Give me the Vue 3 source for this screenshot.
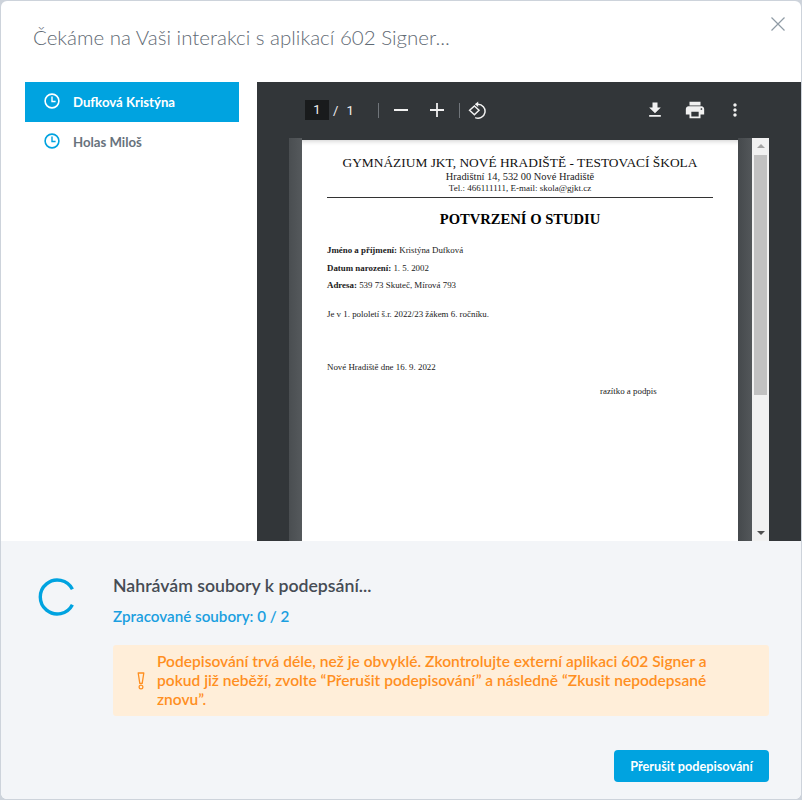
<script setup>
const signers = [
  { name: "Dufková Kristýna", active: true },
  { name: "Holas Miloš", active: false },
];
</script>

<template>
  <div class="modal">
    <header class="modal__head">
      <h1 class="modal__title">Čekáme na Vaši interakci s aplikací 602 Signer...</h1>
      <button class="close" aria-label="Zavřít">
        <svg width="16" height="16" viewBox="0 0 16 16"><path d="M1.5 1.5l13 13M14.5 1.5l-13 13" stroke="#8f9ba5" stroke-width="1.2" fill="none" /></svg>
      </button>
    </header>

    <div class="modal__body">
      <ul class="signers">
        <li v-for="s in signers" :key="s.name" class="signer" :class="{ 'signer--active': s.active }">
          <svg class="clock" width="16" height="16" viewBox="0 0 16 16">
            <circle cx="8" cy="8" r="6.9" fill="none" stroke="currentColor" stroke-width="1.6" />
            <path d="M8 3.6V8.5h3.6" fill="none" stroke="currentColor" stroke-width="1.4" />
          </svg>
          <span>{{ s.name }}</span>
        </li>
      </ul>

      <div class="viewer">
        <div class="toolbar">
          <span class="page-num">1</span>
          <span class="page-sep">/</span>
          <span class="page-total">1</span>
          <span class="divider divider--a"></span>
          <svg class="tool tool--minus" width="14" height="14" viewBox="0 0 14 14"><path d="M0 7h14" stroke="#f1f1f1" stroke-width="1.8" /></svg>
          <svg class="tool tool--plus" width="14" height="14" viewBox="0 0 14 14"><path d="M0 7h14M7 0v14" stroke="#f1f1f1" stroke-width="1.8" /></svg>
          <span class="divider divider--b"></span>
          <svg class="tool tool--rotate" width="18" height="18" viewBox="0 0 18 18">
            <path d="M1.6 9.3L6.4 5l4.6 4.3-4.6 4.4z" fill="none" stroke="#f1f1f1" stroke-width="1.5" />
            <path d="M7.6 3.2h2.2a7 7 0 1 1-2.6 13.4" fill="none" stroke="#f1f1f1" stroke-width="1.5" />
            <path d="M10.2 0.4L7 3.2l3.2 2.8z" fill="#f1f1f1" />
          </svg>
          <span class="toolbar__spacer"></span>
          <svg class="tool" width="20" height="20" viewBox="0 0 24 24"><path fill="#f1f1f1" d="M19 9h-4V3H9v6H5l7 7 7-7zM5 18v2h14v-2H5z" /></svg>
          <svg class="tool tool--print" width="22" height="22" viewBox="0 0 24 24"><path fill="#f1f1f1" d="M19 8H5c-1.66 0-3 1.34-3 3v6h4v4h12v-4h4v-6c0-1.66-1.34-3-3-3zm-3 11H8v-5h8v5zm3-7c-.55 0-1-.45-1-1s.45-1 1-1 1 .45 1 1-.45 1-1 1zm-1-9H6v4h12V3z" /></svg>
          <svg class="tool tool--more" width="20" height="20" viewBox="0 0 24 24"><path fill="#f1f1f1" d="M12 8c1.1 0 2-.9 2-2s-.9-2-2-2-2 .9-2 2 .9 2 2 2zm0 2c-1.1 0-2 .9-2 2s.9 2 2 2 2-.9 2-2-.9-2-2-2zm0 6c-1.1 0-2 .9-2 2s.9 2 2 2 2-.9 2-2-.9-2-2-2z" /></svg>
        </div>

        <div class="stage">
          <div class="strip strip--left"></div>
          <div class="page">
            <div class="doc-school">GYMNÁZIUM JKT, NOVÉ HRADIŠTĚ - TESTOVACÍ ŠKOLA</div>
            <div class="doc-addr">Hradištní 14, 532 00 Nové Hradiště</div>
            <div class="doc-tel">Tel.: 466111111, E-mail: skola@gjkt.cz</div>
            <hr class="doc-rule" />
            <div class="doc-title">POTVRZENÍ O STUDIU</div>
            <p class="doc-row doc-row--first"><b>Jméno a příjmení:</b> Kristýna Dufková</p>
            <p class="doc-row"><b>Datum narození:</b> 1. 5. 2002</p>
            <p class="doc-row"><b>Adresa:</b> 539 73 Skuteč, Mírová 793</p>
            <p class="doc-row doc-row--para">Je v 1. pololetí š.r. 2022/23 žákem 6. ročníku.</p>
            <p class="doc-row doc-row--date">Nové Hradiště dne 16. 9. 2022</p>
            <p class="doc-sign">razítko a podpis</p>
          </div>
          <div class="strip strip--right"></div>
          <div class="scrollbar">
            <span class="arrow arrow--up"></span>
            <span class="thumb"></span>
            <span class="arrow arrow--down"></span>
          </div>
        </div>
      </div>
    </div>

    <footer class="modal__foot">
      <div class="status">
        <svg class="spinner" width="38" height="38" viewBox="0 0 38 38">
          <path d="M34.4 11.2A17 17 0 1 0 34.4 26.8" fill="none" stroke="#00a3e0" stroke-width="3.4" />
        </svg>
        <div class="status__main">
          <div class="status__title">Nahrávám soubory k podepsání...</div>
          <div class="status__count">Zpracované soubory: 0 / 2</div>
          <div class="alert">
            <svg class="alert__icon" width="10" height="18" viewBox="0 0 10 18">
              <path d="M2.2 1h5.6L6.2 11.4H3.8z" fill="none" stroke="#ff8f1f" stroke-width="1.3" stroke-linejoin="round" />
              <circle cx="5" cy="15" r="1.9" fill="none" stroke="#ff8f1f" stroke-width="1.2" />
            </svg>
            <p class="alert__text">Podepisování trvá déle, než je obvyklé. Zkontrolujte externí aplikaci 602 Signer a pokud již neběží, zvolte “Přerušit podepisování” a následně “Zkusit nepodepsané znovu”.</p>
          </div>
        </div>
      </div>
      <div class="actions">
        <button class="btn">Přerušit podepisování</button>
      </div>
    </footer>
  </div>
</template>

<style>
html,
body {
  margin: 0;
  background: #cdd3db;
}
</style>

<style scoped>
.modal {
  box-sizing: border-box;
  width: 800px;
  height: 798px;
  margin: 1px;
  background: #fff;
  border-radius: 6px;
  overflow: hidden;
  display: flex;
  flex-direction: column;
  font-family: "Lato", "Noto Sans", sans-serif;
}
.modal__head {
  height: 81px;
  flex: none;
  position: relative;
  box-sizing: border-box;
  padding: 19px 32px 0;
}
.modal__title {
  margin: 0;
  font-size: 20.5px;
  line-height: 34px;
  font-weight: 300;
  color: #5f6a74;
}
.close {
  position: absolute;
  top: 15px;
  right: 15px;
  padding: 0;
  border: 0;
  background: none;
  display: block;
  line-height: 0;
}
.modal__body {
  height: 459px;
  flex: none;
  display: flex;
  padding-left: 24px;
  gap: 18px;
}
.signers {
  width: 214px;
  flex: none;
  margin: 0;
  padding: 0;
  list-style: none;
}
.signer {
  height: 40px;
  display: flex;
  align-items: center;
  padding-left: 19px;
  gap: 13px;
  font-size: 13.2px;
  font-weight: 700;
  color: #67727c;
}
.signer .clock {
  color: #00a3e0;
  margin-top: -3px;
}
.signer--active {
  background: #00a3e0;
  color: #fff;
}
.signer--active .clock {
  color: #fff;
}
.viewer {
  flex: 1;
  background: #323639;
  display: flex;
  flex-direction: column;
  min-width: 0;
}
.toolbar {
  height: 56px;
  flex: none;
  display: flex;
  align-items: center;
  padding-left: 48px;
  color: #f1f1f1;
  font-family: "Roboto", sans-serif;
  font-size: 13px;
}
.page-num {
  width: 24px;
  height: 20px;
  background: #191b1c;
  text-align: center;
  line-height: 20px;
}
.page-sep {
  margin-left: 4px;
}
.page-total {
  margin-left: 8px;
}
.divider {
  width: 1px;
  height: 15px;
  background: #70757a;
}
.divider--a {
  margin-left: 24px;
}
.tool--minus {
  margin-left: 15px;
}
.tool--plus {
  margin-left: 22px;
}
.divider--b {
  margin-left: 15px;
}
.tool--rotate {
  margin-left: 8px;
}
.toolbar__spacer {
  flex: 1;
}
.tool--print {
  margin-left: 19px;
}
.tool--more {
  margin-left: 19px;
  margin-right: 56px;
}
.stage {
  flex: 1;
  min-height: 0;
  display: flex;
  padding-left: 32px;
  overflow: hidden;
}
.strip {
  flex: none;
  background: linear-gradient(to right, #4a4e51, #55595c);
}
.strip--left {
  width: 13px;
}
.strip--right {
  width: 14px;
  background: linear-gradient(to right, #45494c, #53575a);
}
.page {
  width: 436px;
  flex: none;
  box-sizing: border-box;
  margin-top: 2px;
  background: #fff;
  box-shadow: inset 0 6px 5px -5px rgba(0, 0, 0, 0.2);
  padding: 15px 25px 0;
  color: #1a1a1a;
  font-family: "Liberation Serif", serif;
}
.doc-school {
  font-size: 13.4px;
  line-height: 16px;
  text-align: center;
  color: #111;
  white-space: nowrap;
}
.doc-addr {
  font-size: 10.4px;
  line-height: 12px;
  text-align: center;
}
.doc-tel {
  font-size: 9px;
  line-height: 11px;
  text-align: center;
}
.doc-rule {
  margin: 3px 0 0;
  border: 0;
  height: 1px;
  background: #333;
}
.doc-title {
  margin-top: 13px;
  font-size: 14.6px;
  line-height: 17px;
  font-weight: 700;
  text-align: center;
  color: #000;
}
.doc-row {
  margin: 0;
  font-size: 8.9px;
  line-height: 12px;
  height: 17.5px;
}
.doc-row--first {
  margin-top: 16px;
}
.doc-row--para {
  margin-top: 11.5px;
}
.doc-row--date {
  margin-top: 35px;
}
.doc-sign {
  margin: 6.5px 0 0 273px;
  font-size: 8.9px;
  line-height: 12px;
}
.scrollbar {
  width: 17px;
  flex: none;
  background: #f1f1f1;
  display: flex;
  flex-direction: column;
  align-items: center;
}
.arrow {
  width: 0;
  height: 0;
  border-left: 4px solid transparent;
  border-right: 4px solid transparent;
  flex: none;
}
.arrow--up {
  margin-top: 6px;
  border-bottom: 4px solid #a3a3a3;
}
.thumb {
  width: 13px;
  height: 240px;
  margin-top: 7px;
  background: #c1c1c1;
  flex: none;
}
.arrow--down {
  margin-top: auto;
  margin-bottom: 6px;
  border-top: 4px solid #505050;
}
.modal__foot {
  flex: 1;
  background: #f3f5f8;
  box-sizing: border-box;
  padding: 34px 32px 16px 37px;
}
.status {
  display: flex;
  gap: 37px;
}
.spinner {
  flex: none;
  margin-top: 3px;
}
.status__main {
  flex: 1;
  min-width: 0;
}
.status__title {
  font-size: 17.7px;
  line-height: 22px;
  font-weight: 600;
  color: #464c54;
}
.status__count {
  margin-top: 9px;
  font-size: 15.2px;
  line-height: 20px;
  font-weight: 600;
  color: #1a9fe0;
}
.alert {
  margin-top: 19px;
  height: 71px;
  box-sizing: border-box;
  background: #ffeed9;
  border-radius: 3px;
  display: flex;
  align-items: center;
  padding: 0 40px 0 23px;
  gap: 11px;
}
.alert__icon {
  flex: none;
}
.alert__text {
  margin: 0;
  font-size: 15.55px;
  line-height: 18.7px;
  font-weight: 600;
  color: #ff8f1f;
}
.actions {
  display: flex;
  justify-content: flex-end;
  margin-top: 34px;
}
.btn {
  width: 155px;
  height: 32px;
  border: 0;
  border-radius: 4px;
  background: #00a3e0;
  color: #fff;
  font-family: inherit;
  font-size: 12.7px;
  font-weight: 700;
  padding: 0;
}
</style>
